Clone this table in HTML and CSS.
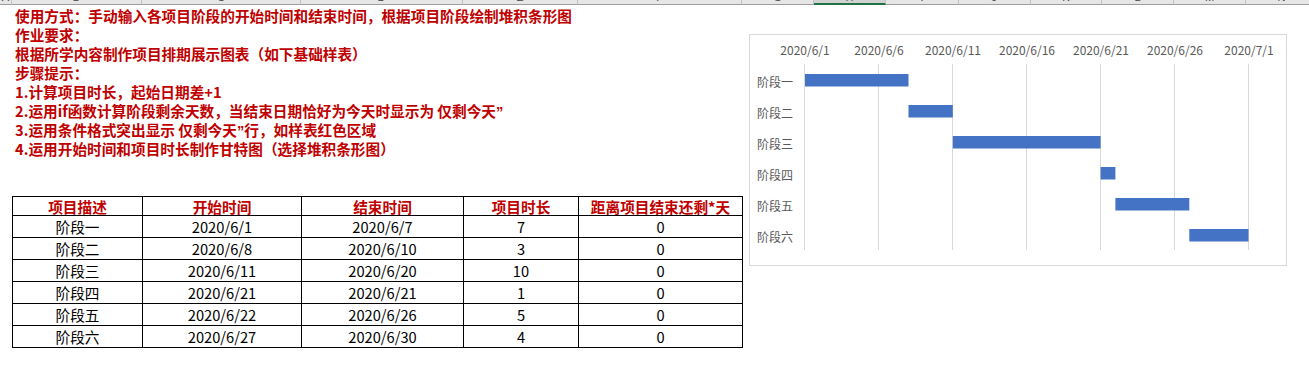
FILE: index.html
```html
<!DOCTYPE html>
<html lang="zh-CN">
<head>
<meta charset="utf-8">
<title>项目排期</title>
<link rel="stylesheet" href="styles.css">
</head>
<body>
<div class="colheads">
  <div class="ch w-a"><span>A</span></div>
  <div class="ch w-b"><span>B</span></div>
  <div class="ch w-c"><span>C</span></div>
  <div class="ch w-d"><span>D</span></div>
  <div class="ch w-e"><span>E</span></div>
  <div class="ch w-f"><span>F</span></div>
  <div class="ch w-g"><span>G</span></div>
  <div class="ch w-h sel"><span>H</span></div>
  <div class="ch w-i"><span>I</span></div>
  <div class="ch w-j"><span>J</span></div>
  <div class="ch w-k"><span>K</span></div>
  <div class="ch w-l"><span>L</span></div>
  <div class="ch w-m"><span>M</span></div>
  <div class="ch w-n"><span>N</span></div>
</div>

<div class="sheet">
  <div class="left">
    <div class="notes">
      <div class="line">使用方式<span class="colon">：</span>手动输入各项目阶段的开始时间和结束时间，根据项目阶段绘制堆积条形图</div>
      <div class="line">作业要求<span class="colon">：</span></div>
      <div class="line">根据所学内容制作项目排期展示图表（如下基础样表）</div>
      <div class="line">步骤提示<span class="colon">：</span></div>
      <div class="line">1.计算项目时长，起始日期差+1</div>
      <div class="line">2.运用if函数计算阶段剩余天数，当结束日期恰好为今天时显示为 仅剩今天<span class="q">”</span></div>
      <div class="line">3.运用条件格式突出显示 仅剩今天<span class="q">”</span>行，如样表红色区域</div>
      <div class="line">4.运用开始时间和项目时长制作甘特图（选择堆积条形图）</div>
      <div class="line"></div>
      <div class="line"></div>
    </div>
    <table class="plan">
      <colgroup>
        <col class="c1"><col class="c2"><col class="c3"><col class="c4"><col class="c5">
      </colgroup>
      <thead>
        <tr><th>项目描述</th><th>开始时间</th><th>结束时间</th><th>项目时长</th><th>距离项目结束还剩*天</th></tr>
      </thead>
      <tbody>
        <tr><td>阶段一</td><td>2020/6/1</td><td>2020/6/7</td><td>7</td><td>0</td></tr>
        <tr><td>阶段二</td><td>2020/6/8</td><td>2020/6/10</td><td>3</td><td>0</td></tr>
        <tr><td>阶段三</td><td>2020/6/11</td><td>2020/6/20</td><td>10</td><td>0</td></tr>
        <tr><td>阶段四</td><td>2020/6/21</td><td>2020/6/21</td><td>1</td><td>0</td></tr>
        <tr><td>阶段五</td><td>2020/6/22</td><td>2020/6/26</td><td>5</td><td>0</td></tr>
        <tr><td>阶段六</td><td>2020/6/27</td><td>2020/6/30</td><td>4</td><td>0</td></tr>
      </tbody>
    </table>
  </div>

  <div class="chart">
    <svg class="chart-svg" width="536" height="230" viewBox="0 0 536 230">
      <g class="grid">
        <line x1="54.5" y1="29" x2="54.5" y2="215"/>
        <line x1="128.5" y1="29" x2="128.5" y2="215"/>
        <line x1="202.5" y1="29" x2="202.5" y2="215"/>
        <line x1="276.5" y1="29" x2="276.5" y2="215"/>
        <line x1="350.5" y1="29" x2="350.5" y2="215"/>
        <line x1="424.5" y1="29" x2="424.5" y2="215"/>
        <line x1="498.5" y1="29" x2="498.5" y2="215"/>
      </g>
      <g class="axis">
        <text x="55" y="14">2020/6/1</text>
        <text x="129" y="14">2020/6/6</text>
        <text x="203" y="14">2020/6/11</text>
        <text x="277" y="14">2020/6/16</text>
        <text x="351" y="14">2020/6/21</text>
        <text x="425" y="14">2020/6/26</text>
        <text x="499" y="14">2020/7/1</text>
      </g>
      <g class="cats">
        <text x="43" y="46">阶段一</text>
        <text x="43" y="77">阶段二</text>
        <text x="43" y="108">阶段三</text>
        <text x="43" y="139">阶段四</text>
        <text x="43" y="170">阶段五</text>
        <text x="43" y="201">阶段六</text>
      </g>
      <g class="bars">
        <rect x="55" y="39" width="103.5" height="12.5"/>
        <rect x="158.5" y="70" width="44.3" height="12.5"/>
        <rect x="202.8" y="101" width="147.8" height="12.5"/>
        <rect x="350.6" y="132" width="14.8" height="12.5"/>
        <rect x="365.4" y="163" width="73.9" height="12.5"/>
        <rect x="439.3" y="194" width="59.2" height="12.5"/>
      </g>
    </svg>
  </div>
</div>
</body>
</html>
```

FILE: styles.css
```css
html, body {
  margin: 0;
  padding: 0;
  background: #ffffff;
}

body {
  font-family: "Noto Sans CJK SC", "Noto Sans", sans-serif;
  color: #000;
  width: 1309px;
  height: 368px;
  overflow: hidden;
}

/* column header strip (mostly scrolled out of view) */
.colheads {
  display: flex;
  height: 5px;
  overflow: hidden;
  background: #e6e6e6;
}

.ch {
  flex: none;
  box-sizing: border-box;
  height: 5px;
  border-right: 1px solid #c3c3c3;
  border-bottom: 1px solid #9e9e9e;
  overflow: hidden;
  text-align: center;
  font-family: "Liberation Sans", "DejaVu Sans", sans-serif;
  font-size: 11px;
  color: #444;
}

.ch span {
  display: block;
  line-height: 14px;
  margin-top: -10px;
}

.ch.sel {
  background: #d2d2d2;
  color: #1e6b3f;
  border-bottom: 2px solid #217346;
}

.w-a { width: 12px; }
.w-b { width: 130px; }
.w-c { width: 159px; }
.w-d { width: 162px; }
.w-e { width: 115px; }
.w-f { width: 164px; }
.w-g { width: 72px; }
.w-h { width: 72px; }
.w-i { width: 73px; }
.w-j { width: 72px; }
.w-k { width: 71px; }
.w-l { width: 72px; }
.w-m { width: 72px; }
.w-n { width: 72px; }

/* main sheet */
.sheet {
  display: flex;
  align-items: flex-start;
}

.left {
  width: 749px;
  flex: none;
  padding-top: 1px;
}

.notes .line {
  height: 19px;
  line-height: 19px;
  padding-left: 15px;
  font-size: 14.67px;
  font-weight: bold;
  color: #c00000;
  white-space: nowrap;
}

.notes .q {
  font-family: "Liberation Sans", sans-serif;
}

.notes .colon {
  font-family: "Noto Sans CJK TC", "Noto Sans CJK SC", sans-serif;
}

.plan {
  margin-left: 12px;
  border-collapse: collapse;
  table-layout: fixed;
  width: 731px;
}

.plan .c1 { width: 130px; }
.plan .c2 { width: 159px; }
.plan .c3 { width: 162px; }
.plan .c4 { width: 115px; }
.plan .c5 { width: 164px; }

.plan th,
.plan td {
  border: 1px solid #000;
  padding: 0;
  text-align: center;
  vertical-align: middle;
  font-size: 14.67px;
  line-height: 17px;
  white-space: nowrap;
  overflow: hidden;
}

.plan th {
  height: 18px;
  color: #c00000;
  font-weight: bold;
}

.plan td {
  height: 21px;
  font-weight: normal;
}

/* floating chart object */
.chart {
  flex: none;
  margin-top: 29px;
  width: 536px;
  height: 230px;
  border: 1px solid #d9d9d9;
  background: #fff;
}

.chart-svg {
  display: block;
}

.grid line {
  stroke: #d9d9d9;
  stroke-width: 1;
}

.axis text {
  font-family: "Noto Sans CJK SC", "Noto Sans", sans-serif;
  font-size: 12px;
  fill: #595959;
  text-anchor: middle;
  dominant-baseline: central;
}

.cats text {
  font-family: "Noto Sans CJK SC", sans-serif;
  font-size: 12px;
  fill: #595959;
  text-anchor: end;
  dominant-baseline: central;
}

.bars rect {
  fill: #4472c4;
}
```
